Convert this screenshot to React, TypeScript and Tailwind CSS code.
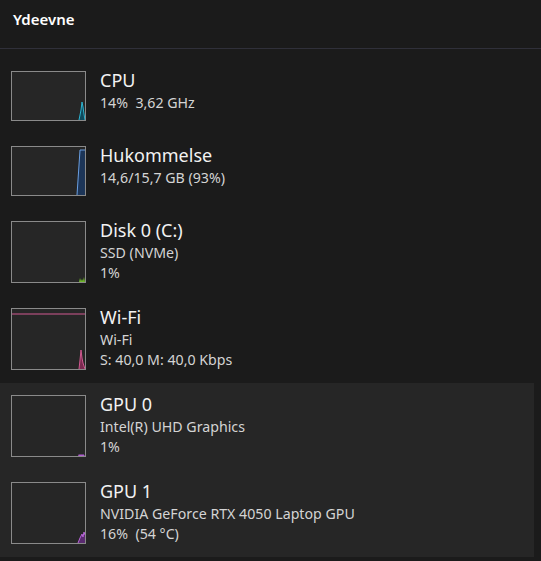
import React from 'react';

type Item = {
    name: string;
    lines: string[];
    graph: React.ReactNode;
    active?: boolean;
};

const Thumb = ({ tall, children }: { tall: boolean; children: React.ReactNode }) => (
    <div className={`relative w-[75px] shrink-0 border border-[#8a8a8a] bg-[#262626] ${tall ? 'h-[62px]' : 'h-[50px]'}`}>
        <svg className="absolute inset-0 h-full w-full" viewBox={tall ? '0 0 73 60' : '0 0 73 48'} preserveAspectRatio="none">
            {children}
        </svg>
    </div>
);

const items: Item[] = [
    {
        name: 'CPU',
        lines: ['14%  3,62 GHz'],
        graph: (
            <>
                <path d="M67 48 L69 38 L70 30 L71 35 L72 42 L73 48 Z" fill="#0f4a5c" />
                <path d="M67 48 L69 38 L70 30 L71 35 L72 42 L73 48" fill="none" stroke="#2bb3d0" strokeWidth="1" />
            </>
        ),
    },
    {
        name: 'Hukommelse',
        lines: ['14,6/15,7 GB (93%)'],
        graph: (
            <>
                <path d="M65 48 L68 3 L73 3 L73 48 Z" fill="#1c3558" />
                <path d="M65 48 L68 3 L73 3" fill="none" stroke="#6a9ee0" strokeWidth="1" />
            </>
        ),
    },
    {
        name: 'Disk 0 (C:)',
        lines: ['SSD (NVMe)', '1%'],
        graph: (
            <path d="M67 60 L68 56 L69 59 L70 57 L71 59 L72 55 L73 60 Z" fill="#6fb52c" />
        ),
    },
    {
        name: 'Wi-Fi',
        lines: ['Wi-Fi', 'S: 40,0 M: 40,0 Kbps'],
        graph: (
            <>
                <path d="M0 5 L73 5" stroke="#d0588f" strokeWidth="1.2" />
                <path d="M67 60 L68 51 L69 41 L70 49 L71 54 L72 57 L73 60 Z" fill="#7a2a50" />
                <path d="M67 60 L68 51 L69 41 L70 49 L71 54 L72 57 L73 60" fill="none" stroke="#d0588f" strokeWidth="1" />
            </>
        ),
    },
    {
        name: 'GPU 0',
        lines: ['Intel(R) UHD Graphics', '1%'],
        active: true,
        graph: <path d="M66 60 L67 58 L68 59 L69 58 L70 59 L71 58 L72 59 L73 60 Z" fill="#b05fd0" />,
    },
    {
        name: 'GPU 1',
        lines: ['NVIDIA GeForce RTX 4050 Laptop GPU', '16%  (54 °C)'],
        active: true,
        graph: (
            <>
                <path d="M66 60 L68 55 L70 51 L71 54 L72 49 L73 52 L73 60 Z" fill="#5a2a70" />
                <path d="M66 60 L68 55 L70 51 L71 54 L72 49 L73 52" fill="none" stroke="#b865d8" strokeWidth="1" />
            </>
        ),
    },
];

const Row = ({ item }: { item: Item }) => {
    const tall = item.lines.length > 1;
    return (
        <div className="flex items-start gap-[14px] pt-3 pb-[13px] pl-[11px]">
            <Thumb tall={tall}>{item.graph}</Thumb>
            <div className="-mt-[4px] flex flex-col">
                <div className="text-[18px] leading-[26px] text-[#f2f2f2]">{item.name}</div>
                {item.lines.map((l, i) => (
                    <div key={i} className="whitespace-pre text-[14.2px] leading-[20px] text-[#d4d4d4]">{l}</div>
                ))}
            </div>
        </div>
    );
};

export default function App() {
    const active = items.filter(i => i.active);
    const rest = items.filter(i => !i.active);
    return (
        <div className="h-[561px] w-[541px] overflow-hidden bg-[#1b1b1b]" style={{ fontFamily: '"Noto Sans", "Open Sans", sans-serif' }}>
            <div className="flex h-[49px] items-start border-b border-[#30303a] pl-[13px] pt-[8px]">
                <span className="text-[15px] font-semibold text-white">Ydeevne</span>
            </div>
            <div className="pt-[10px]">
                {rest.map(item => <Row key={item.name} item={item} />)}
                <div className="mr-[7px] bg-[#262626]">
                    {active.map(item => <Row key={item.name} item={item} />)}
                </div>
            </div>
        </div>
    );
}
